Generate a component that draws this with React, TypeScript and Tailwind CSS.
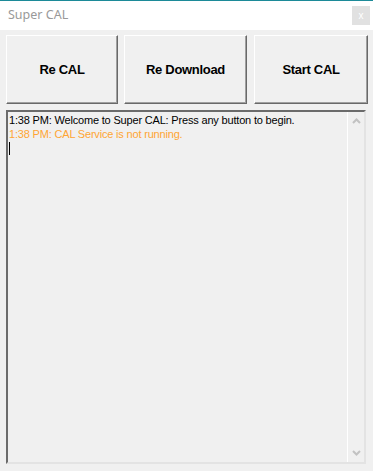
import React from "react";

function CalButton({ label, width }: { label: string; width: string }) {
  return (
    <button
      className={`${width} h-[69px] shrink-0 border border-t-white border-l-white border-r-[#696969] border-b-[#696969] bg-[#f0f0f0] shadow-[inset_-1px_-1px_0_#a0a0a0] font-['Liberation_Sans',Arial,sans-serif] text-[13px] font-bold tracking-[-0.3px] text-black`}
    >
      {label}
    </button>
  );
}

export default function App() {
  return (
    <div className="flex h-[471px] w-[373px] flex-col bg-[#f0f0f0] font-['Liberation_Sans',Arial,sans-serif]">
      {/* title bar */}
      <div className="flex h-[30px] shrink-0 items-center justify-between border-t border-t-[#1c8a98] bg-white pl-2 pr-[3px]">
        <span className="font-['Noto_Sans',sans-serif] text-[12.5px] text-[#999999]">Super CAL</span>
        <div className="flex h-[19px] w-[18px] items-center justify-center bg-[#e1e1e1] text-[10px] leading-none text-white">
          x
        </div>
      </div>

      <div className="mt-[5px] flex pl-[6px]">
        <CalButton label="Re CAL" width="w-[112px]" />
        <div className="w-[6px] shrink-0" />
        <CalButton label="Re Download" width="w-[123px]" />
        <div className="w-[7px] shrink-0" />
        <CalButton label="Start CAL" width="w-[114px]" />
      </div>

      {/* log box */}
      <div className="ml-[6px] mt-[6px] flex h-[354px] w-[360px] border-2 border-t-[#6b6b6b] border-l-[#6b6b6b] border-r-[#e3e3e3] border-b-[#e3e3e3] bg-[#f0f0f0]">
        <div className="flex-1 pl-[1px] pt-[1px] text-[11px] leading-[14px] tracking-[-0.18px]">
          <div className="text-black">1:38 PM: Welcome to Super CAL: Press any button to begin.</div>
          <div className="text-[#ffa533]">1:38 PM: CAL Service is not running.</div>
          <div className="mt-[1px] h-[13px] w-px bg-black" />
        </div>
        <div className="flex w-[17px] shrink-0 flex-col items-center justify-between border-l border-l-white py-[6px]">
          <svg width="9" height="6" viewBox="0 0 9 6">
            <path d="M1 5 L4.5 1.5 L8 5" fill="none" stroke="#c2c2c2" strokeWidth="2" />
          </svg>
          <svg width="9" height="6" viewBox="0 0 9 6">
            <path d="M1 1 L4.5 4.5 L8 1" fill="none" stroke="#c2c2c2" strokeWidth="2" />
          </svg>
        </div>
      </div>
    </div>
  );
}
